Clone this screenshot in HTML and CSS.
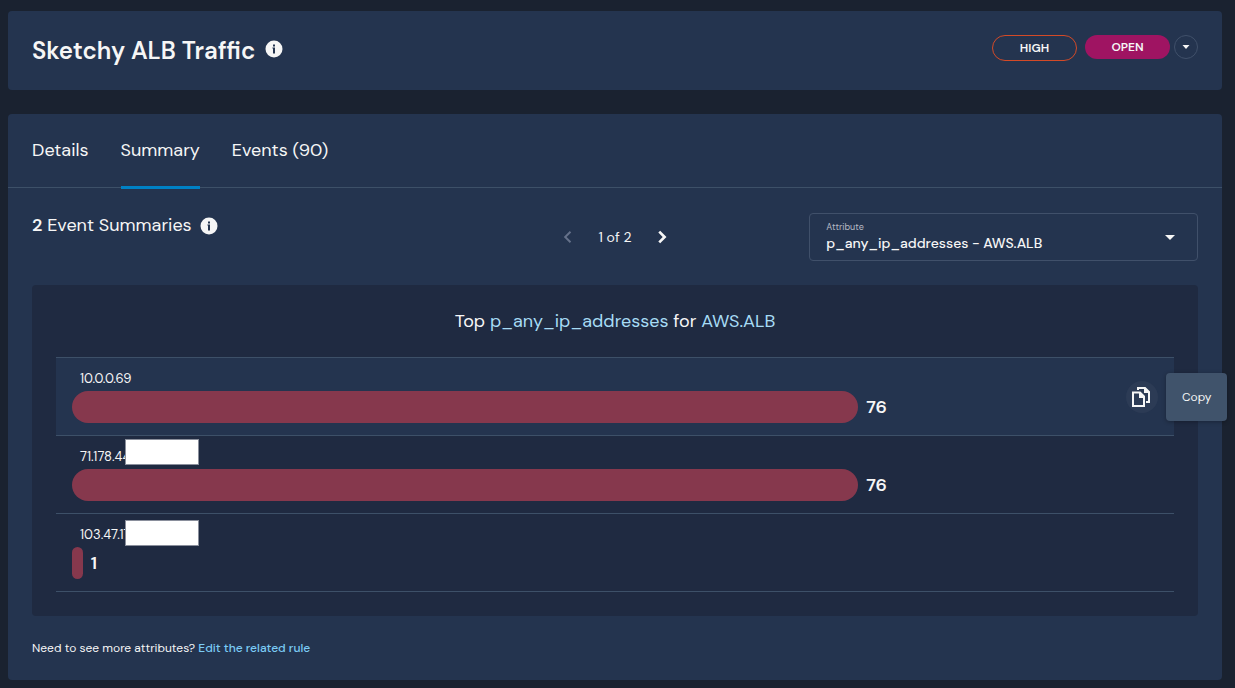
FILE: index.html
```html
<!DOCTYPE html>
<html lang="en">
<head>
<meta charset="utf-8">
<meta name="viewport" content="width=device-width, initial-scale=1">
<title>Sketchy ALB Traffic</title>
<link rel="stylesheet" href="styles.css">
</head>
<body>
<header class="card alert-header">
  <div class="title-group">
    <h1 class="title">Sketchy ALB Traffic</h1>
    <svg class="info" viewBox="0 0 18 18" aria-hidden="true"><circle cx="9" cy="9" r="8.5" fill="#f6f6f6"/><path d="M8 4.500h2v2H8zM7.400 7.500H10V13.500H8V8.500h-.6z" fill="#24344f"/></svg>
  </div>
  <div class="status-group">
    <span class="severity">HIGH</span>
    <div class="status">
      <span class="status-pill">OPEN</span>
      <button class="status-menu" type="button" aria-label="Change status"><svg width="8" height="4" viewBox="0 0 8 4" aria-hidden="true"><path d="M.5 0h7L4 4z" fill="#f6f6f6"/></svg></button>
    </div>
  </div>
</header>

<main class="card">
  <nav class="tabs">
    <button class="tab" type="button">Details</button>
    <button class="tab tab-active" type="button">Summary</button>
    <button class="tab" type="button">Events (90)</button>
  </nav>
  <section class="content">
    <div class="toolbar">
      <div class="summary-count">
        <h2 class="count-text"><strong>2</strong> Event Summaries</h2>
        <svg class="info" viewBox="0 0 18 18" aria-hidden="true"><circle cx="9" cy="9" r="8.5" fill="#f6f6f6"/><path d="M8 4.500h2v2H8zM7.400 7.500H10V13.500H8V8.500h-.6z" fill="#24344f"/></svg>
      </div>
      <div class="pager">
        <button class="page-button" type="button" aria-label="Previous" disabled><svg width="24" height="24" viewBox="0 0 24 24" aria-hidden="true"><path d="M15.200 7.400 13.800 6l-6 6 6 6 1.400-1.400L10.600 12z" fill="#65718a"/></svg></button>
        <span>1 of 2</span>
        <button class="page-button" type="button" aria-label="Next"><svg width="24" height="24" viewBox="0 0 24 24" aria-hidden="true"><path d="M10.200 5.700 8.300 7.600l4.400 4.400-4.400 4.400 1.900 1.900L16.500 12z" fill="#f6f6f6"/></svg></button>
      </div>
      <div class="field">
        <label class="field-label" for="attribute">Attribute</label>
        <select class="field-select" id="attribute"><option>p_any_ip_addresses - AWS.ALB</option></select>
        <svg class="field-arrow" width="10" height="5" viewBox="0 0 10 5" aria-hidden="true"><path d="M0 0h10L5 5z" fill="#f6f6f6"/></svg>
      </div>
    </div>

    <div class="panel">
      <h3 class="panel-title">Top <span class="accent">p_any_ip_addresses</span> for <span class="accent">AWS.ALB</span></h3>
      <ul class="rows">
        <li class="row row-hover">
          <div class="row-label">10.0.0.69</div>
          <div class="meter"><div class="bar" style="width:72.4%"></div><strong class="value">76</strong></div>
          <div class="copy">
            <button class="copy-button" type="button" aria-label="Copy 10.0.0.69"><svg width="20" height="22" viewBox="0 0 20 22" aria-hidden="true"><path d="M1 6.500h7l4 4V20H1zM6 4V2h7l4 4v10h-3" fill="none" stroke="#f6f6f6" stroke-width="2"/><path d="M7 6l6 6H7zM12 1l6 6h-6z" fill="#f6f6f6"/></svg></button>
            <span class="tooltip" role="tooltip">Copy</span>
          </div>
        </li>
        <li class="row">
          <div class="row-label">71.178.44</div>
          <span class="mask mask-high"></span>
          <div class="meter"><div class="bar" style="width:72.4%"></div><strong class="value">76</strong></div>
        </li>
        <li class="row">
          <div class="row-label">103.47.17</div>
          <span class="mask mask-low"></span>
          <div class="meter"><div class="bar" style="width:1%"></div><strong class="value">1</strong></div>
        </li>
      </ul>
    </div>
    <p class="footnote">Need to see more attributes? <a class="link" href="#rule">Edit the related rule</a></p>
  </section>
</main>
</body>
</html>
```
FILE: styles.css
```css
* {
  box-sizing: border-box;
}

body {
  margin: 0;
  padding: 11px 13px 8px 8px;
  display: flex;
  flex-direction: column;
  gap: 24px;
  background: #1a2230;
  color: #f6f6f6;
  font-family: "DM Sans", Inter, "Liberation Sans", sans-serif;
  font-size: 14px;
}

button,
select {
  padding: 0;
  border: 0;
  background: none;
  color: inherit;
  font: inherit;
}

h1,
h2,
h3,
p,
ul {
  margin: 0;
  padding: 0;
  font-weight: 400;
}

.card {
  background: #24344f;
  border-radius: 4px;
}

.alert-header {
  display: flex;
  justify-content: space-between;
  align-items: flex-start;
  padding: 24px 24px 23px;
}

.title-group {
  display: flex;
  gap: 10px;
}

.title {
  font-size: 24px;
  font-weight: 600;
  line-height: 32px;
}

.info {
  width: 18px;
  height: 18px;
  margin-top: 5px;
}

.status-group {
  display: flex;
  gap: 8px;
  font-size: 12px;
  font-weight: 600;
}

.severity,
.status-pill {
  width: 85px;
  border-radius: 13px;
  line-height: 24px;
  text-align: center;
}

.severity {
  border: 1px solid #d44a27;
}

.status {
  display: flex;
  align-items: flex-start;
  gap: 4px;
}

.status-pill {
  background: #9f1462;
}

.status-menu {
  display: grid;
  place-items: center;
  width: 24px;
  height: 24px;
  border: 1px solid #40506a;
  border-radius: 50%;
}

.tabs {
  display: flex;
  gap: 32px;
  height: 74px;
  padding: 0 24px;
  border-bottom: 1px solid #3d5068;
}

.tab {
  height: 75px;
  border-bottom: 3px solid transparent;
  font-size: 18px;
}

.tab-active {
  border-color: #0081c5;
}

.content {
  padding: 25px 24px 24px;
}

.toolbar {
  display: grid;
  grid-template-columns: repeat(3, 1fr);
  height: 48px;
}

.summary-count {
  display: flex;
  gap: 8px;
}

.summary-count .info {
  margin-top: 4px;
}

.count-text {
  font-size: 18px;
  line-height: 24px;
}

.count-text strong {
  font-weight: 600;
}

.pager {
  display: flex;
  justify-content: center;
  align-items: center;
  gap: 19px;
}

.page-button {
  display: flex;
}

.field {
  display: grid;
}

.field-label,
.field-select,
.field-arrow {
  grid-area: 1 / 1;
}

.field-label {
  justify-self: start;
  padding: 8px 0 0 17px;
  color: #b5bac4;
  font-size: 9px;
  line-height: 12px;
}

.field-select {
  appearance: none;
  width: 100%;
  padding: 12px 40px 0 16px;
  border: 1px solid #40506a;
  border-radius: 4px;
  font-size: 14px;
  font-weight: 500;
}

.field-select option {
  background: #24344f;
}

.field-arrow {
  place-self: center end;
  margin-right: 23px;
  pointer-events: none;
}

.panel {
  margin-top: 24px;
  padding: 24px;
  border-radius: 4px;
  background: #1f2a41;
}

.panel-title {
  font-size: 18px;
  line-height: 24px;
  text-align: center;
}

.accent {
  color: #a7dcf5;
}

.rows {
  margin-top: 24px;
  border-top: 1px solid #3d5068;
  list-style: none;
}

.row {
  position: relative;
  padding: 12px 16px;
  border-bottom: 1px solid #3d5068;
}

.row-hover {
  background: #24344f;
}

.row-label {
  margin-bottom: 3px;
  padding-left: 8px;
  font-size: 13px;
  line-height: 18px;
}

.meter {
  display: flex;
  align-items: center;
  gap: 8px;
}

.bar {
  height: 32px;
  border-radius: 16px;
  background: #86384d;
}

.value {
  font-size: 18px;
  font-weight: 600;
}

.mask {
  position: absolute;
  left: 69px;
  width: 74px;
  height: 26px;
  border: 1px solid #8a8f9c;
  background: #fff;
}

.mask-high {
  top: 3px;
}

.mask-low {
  top: 6px;
}

.copy {
  position: absolute;
  top: 15px;
  left: calc(100% - 48px);
  display: flex;
  align-items: center;
  gap: 8px;
}

.copy-button {
  display: grid;
  place-items: center;
  width: 32px;
  height: 32px;
  border-radius: 50%;
  background: #2c3b55;
}

.tooltip {
  padding: 0 16px;
  border-radius: 4px;
  background: #40536b;
  box-shadow: 0 1px 4px rgba(0, 0, 0, 0.3);
  font-size: 12px;
  line-height: 48px;
}

.footnote {
  margin-top: 24px;
  font-size: 12px;
  line-height: 16px;
}

.link {
  color: #7bcbf5;
  font-weight: 500;
  text-decoration: none;
}
```
